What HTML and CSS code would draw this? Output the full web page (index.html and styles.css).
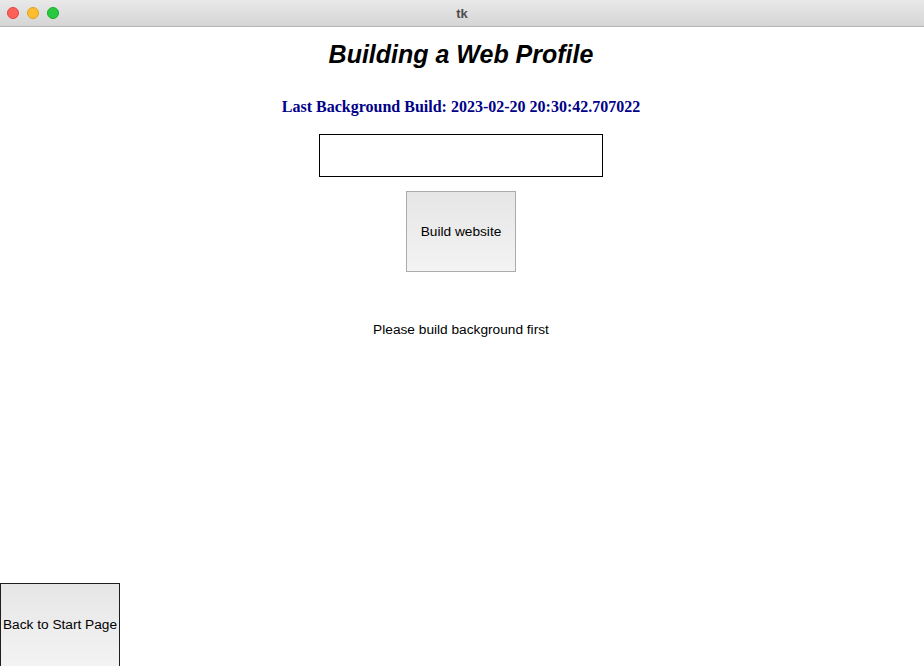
FILE: index.html
```html
<!DOCTYPE html>
<html>
<head>
<meta charset="utf-8">
<link rel="stylesheet" href="styles.css">
</head>
<body>
<div class="window">
  <div class="titlebar">
    <div class="lights">
      <span class="light red"></span>
      <span class="light yellow"></span>
      <span class="light green"></span>
    </div>
    <div class="wintitle">tk</div>
  </div>
  <div class="content">
    <main class="main">
      <h1 class="heading">Building a Web Profile</h1>
      <div class="subheading">Last Background Build: 2023-02-20 20:30:42.707022</div>
      <div class="entry"></div>
      <button class="btn build">Build website</button>
      <div class="status">Please build background first</div>
    </main>
    <footer class="footer">
      <button class="btn back">Back to Start Page</button>
    </footer>
  </div>
</div>
</body>
</html>
```
FILE: styles.css
```css
html, body {
  margin: 0;
  padding: 0;
  width: 924px;
  height: 666px;
  overflow: hidden;
  background: #ffffff;
}
.window {
  width: 924px;
  height: 666px;
  display: flex;
  flex-direction: column;
  font-family: "Liberation Sans", Arial, sans-serif;
}
.titlebar {
  height: 26px;
  flex: none;
  background: linear-gradient(#e9e9e9, #d5d5d5);
  border-bottom: 1px solid #b4b4b4;
  display: flex;
  align-items: center;
  position: relative;
}
.lights {
  display: flex;
  gap: 8px;
  padding-left: 7px;
}
.light {
  width: 12px;
  height: 12px;
  border-radius: 50%;
  box-sizing: border-box;
}
.red { background: #fe5f57; border: 1px solid #e0443e; }
.yellow { background: #febc2e; border: 1px solid #dea123; }
.green { background: #28c840; border: 1px solid #1aab29; }
.wintitle {
  position: absolute;
  left: 0;
  right: 0;
  text-align: center;
  font-size: 13px;
  font-weight: bold;
  color: #4d4d4d;
  pointer-events: none;
}
.content {
  flex: 1;
  display: flex;
  flex-direction: column;
}
.main {
  flex: 1;
  display: flex;
  flex-direction: column;
  align-items: center;
  padding-right: 2px;
}
.heading {
  margin: 13px 0 0 0;
  font-size: 25px;
  line-height: 28px;
  font-weight: bold;
  font-style: italic;
  color: #000;
}
.subheading {
  margin-top: 30px;
  font-family: "Liberation Serif", "Times New Roman", serif;
  font-weight: bold;
  font-size: 16px;
  line-height: 18px;
  color: #000088;
}
.entry {
  margin-top: 18px;
  width: 284px;
  height: 43px;
  box-sizing: border-box;
  border: 1px solid #000;
  background: #fff;
}
.btn {
  font-family: "Liberation Sans", Arial, sans-serif;
  font-size: 13.7px;
  color: #000;
  background: linear-gradient(#e6e6e6, #f3f3f3);
  box-sizing: border-box;
  padding: 0;
  margin: 0;
}
.build {
  margin-top: 14px;
  width: 110px;
  height: 81px;
  border: 1px solid #ababab;
}
.status {
  margin-top: 50px;
  font-size: 13.7px;
  line-height: 15px;
  color: #000;
}
.footer {
  display: flex;
}
.back {
  width: 120px;
  height: 83px;
  border: 1px solid #1e1e1e;
  border-bottom: none;
  padding-bottom: 1px;
}
```
